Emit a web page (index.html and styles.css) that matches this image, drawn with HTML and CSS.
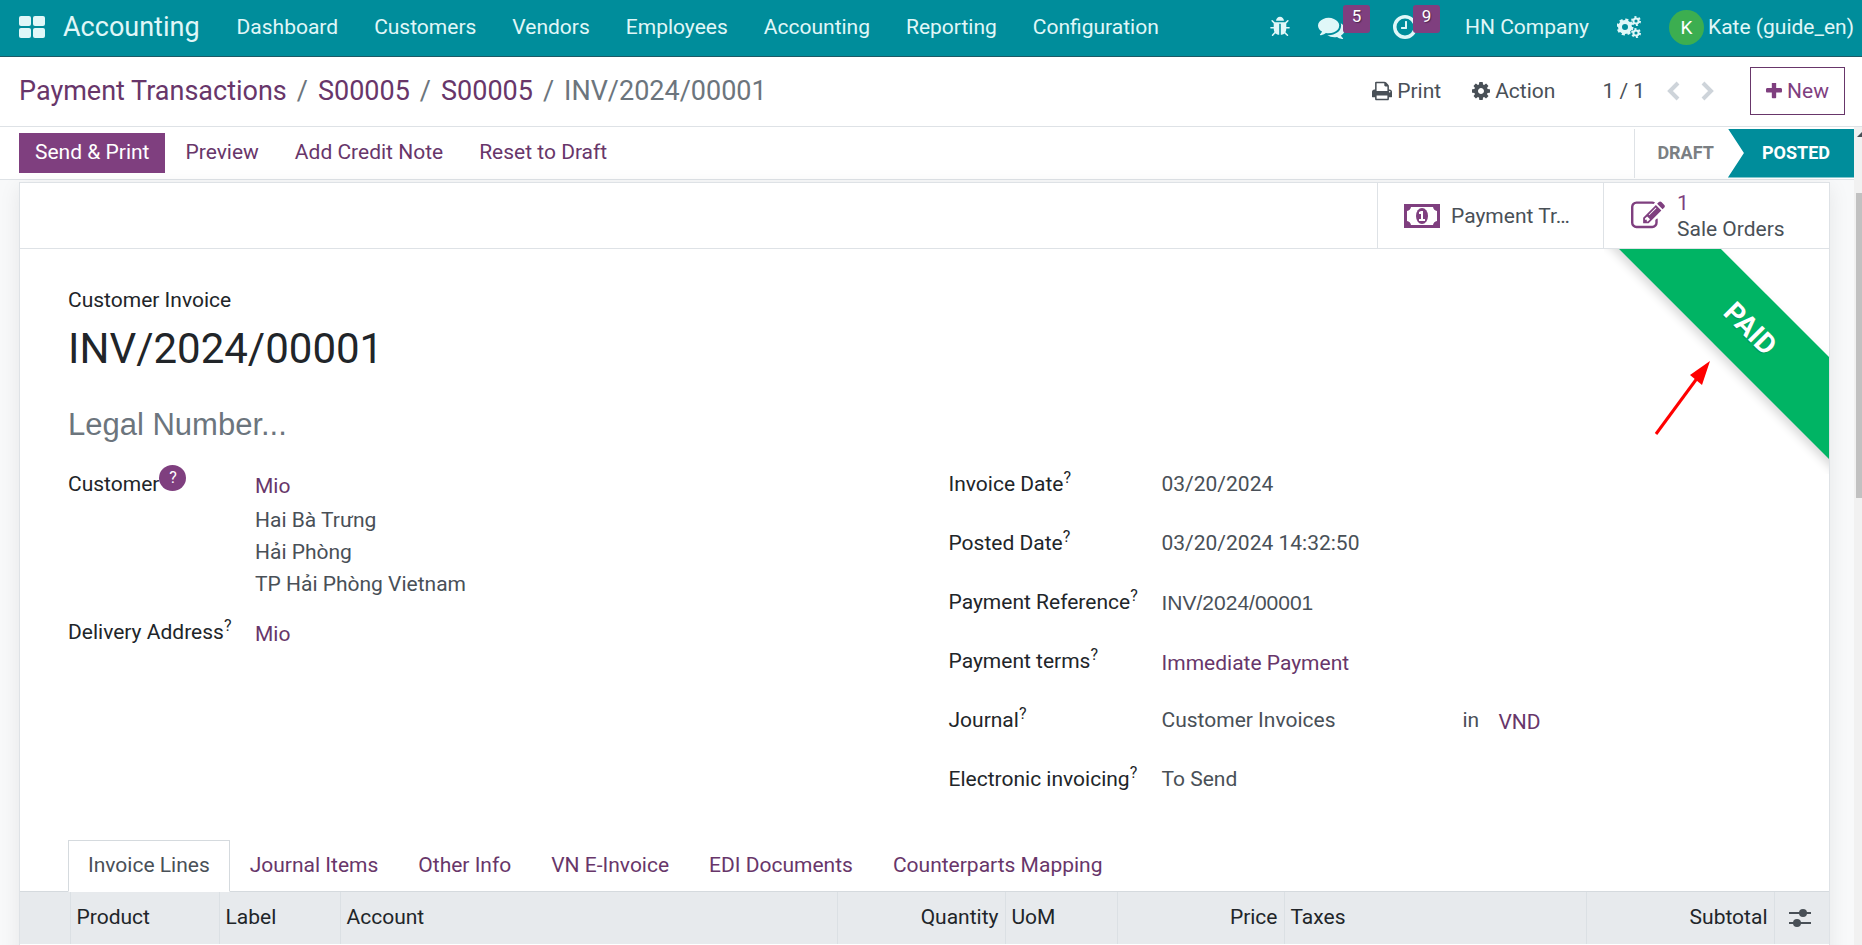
FILE: index.html
```html
<!DOCTYPE html>
<html lang="en">
	<head>
		<meta charset="UTF-8">
		<title>INV/2024/00001</title>
		<link rel="stylesheet" href="styles.css">
	</head>

	<body>
		<!--top menu-->
		<header class="navbar">
			<a class="apps" href="#" aria-label="Home menu">
				<svg width="26" height="22" viewBox="0 0 26 22"><rect width="12" height="10" rx="2"/><rect x="14" width="12" height="10" rx="2"/><rect y="12" width="12" height="10" rx="2"/><rect x="14" y="12" width="12" height="10" rx="2"/></svg>
			</a>
			<a class="brand" href="#">Accounting</a>
			<nav class="menu">
				<a href="#">Dashboard</a>
				<a href="#">Customers</a>
				<a href="#">Vendors</a>
				<a href="#">Employees</a>
				<a href="#">Accounting</a>
				<a href="#">Reporting</a>
				<a href="#">Configuration</a>
			</nav>
			<div class="systray">
				<button class="bug" aria-label="Debug">
					<svg width="22" height="22" viewBox="0 0 1792 1792"><path d="M1696 960q0 26-19 45t-45 19h-224q0 171-67 290l208 209q19 19 19 45t-19 45q-18 19-45 19t-45-19l-198-197q-5 5-15 13t-42 28.500-65 36.500-82 29-97 13v-896h-128v896q-51 0-101.500-13.500t-87-33-66-39-43.500-32.500l-15-14-183 207q-20 21-48 21-24 0-43-16-19-18-20.500-44.500t15.500-46.500l202-227q-58-114-58-274h-224q-26 0-45-19t-19-45 19-45 45-19h224v-294l-173-173q-19-19-19-45t19-45 45-19 45 19l173 173h844l173-173q19-19 45-19t45 19 19 45-19 45l-173 173v294h224q26 0 45 19t19 45zm-480-576h-640q0-133 93.500-226.500t226.500-93.500 226.500 93.500 93.500 226.500z"/></svg>
				</button>
				<button class="chat" aria-label="Messages">
					<svg width="27" height="27" viewBox="0 0 1792 1792"><path d="M1408 768q0 139-94 257t-256.500 186.500-353.500 68.500q-86 0-176-16-124 88-278 128-36 9-86 16h-3q-11 0-20.500-8t-11.500-21q-1-3-1-6.500t.5-6.500 2-6l2.500-5 3.500-5.500 4-5 4.500-5 4-4.500q5-6 23-25t26-29.500 22.500-29 25-38.500 20.500-44q-124-72-195-177t-71-224q0-139 94-257t256.500-186.500 353.500-68.500 353.500 68.500 256.500 186.500 94 257zm384 256q0 120-71 224.500t-195 176.500q10 24 20.500 44t25 38.500 22.500 29 26 29.500 23 25q1 1 4 4.500t4.500 5 4 5 3.500 5.500l2.500 5 2 6 .5 6.500-1 6.500q-3 14-13 22t-22 7q-50-7-86-16-154-40-278-128-90 16-176 16-271 0-472-132 58 4 88 4 161 0 309-45t264-129q125-92 192-212t67-254q0-77-23-152 129 71 204 178t75 230z"/></svg>
					<span class="badge">5</span>
				</button>
				<button class="clock" aria-label="Activities">
					<svg width="28" height="28" viewBox="0 0 1792 1792"><circle cx="896" cy="896" r="656" fill="none" stroke="currentColor" stroke-width="224"/><path d="M1024 544v448q0 14-9 23t-23 9h-320q-14 0-23-9t-9-23v-64q0-14 9-23t23-9h224v-352q0-14 9-23t23-9h64q14 0 23 9t9 23z"/></svg>
					<span class="badge">9</span>
				</button>
				<button class="company">HN Company</button>
				<button class="tools" aria-label="Settings">
					<svg width="24" height="22" viewBox="0 0 24 22" fill="none" stroke="currentColor">
						<circle cx="8" cy="11" r="5" stroke-width="4"/>
						<circle cx="8" cy="11" r="7" stroke-width="3" stroke-dasharray="3 2.5"/>
						<circle cx="19" cy="5" r="2.600" stroke-width="2"/>
						<circle cx="19" cy="5" r="4" stroke-width="2" stroke-dasharray="2 2.190"/>
						<circle cx="19" cy="17" r="2.600" stroke-width="2"/>
						<circle cx="19" cy="17" r="4" stroke-width="2" stroke-dasharray="2 2.190"/>
					</svg>
				</button>
				<button class="user"><span class="avatar">K</span>Kate (guide_en)</button>
			</div>
		</header>

		<!--breadcrumb and record actions-->
		<div class="controlPanel">
			<nav class="breadcrumb">
				<a href="#">Payment Transactions</a><span>/</span><a href="#">S00005</a><span>/</span><a href="#">S00005</a><span>/</span>INV/2024/00001
			</nav>
			<div class="actions">
				<button class="print">
					<svg width="20" height="22" viewBox="0 0 1664 1792"><path d="M384 1536h896v-256H384v256zm0-640h896V512h-160q-40 0-68-28t-28-68V256H384v640zm1152 64q0-26-19-45t-45-19-45 19-19 45 19 45 45 19 45-19 19-45zm128 0v416q0 13-9.500 22.500t-22.500 9.500h-224v160q0 40-28 68t-68 28H352q-40 0-68-28t-28-68v-160H32q-13 0-22.500-9.500T0 1376V960q0-79 56.500-135.500T192 768h64V224q0-40 28-68t68-28h672q40 0 88 20t76 48l152 152q28 28 48 76t20 88v256h64q79 0 135.500 56.500T1664 960z"/></svg>
					Print
				</button>
				<button class="action">
					<svg width="18" height="18" viewBox="128 128 1536 1536"><path d="M1152 896q0-106-75-181t-181-75-181 75-75 181 75 181 181 75 181-75 75-181zm512-109v222q0 12-8 23t-20 13l-185 28q-19 54-39 91 35 50 107 138 10 12 10 25t-9 23q-27 37-99 108t-94 71q-12 0-26-9l-138-108q-44 23-91 38-16 136-29 186-7 28-36 28h-222q-14 0-24.500-8.500t-11.500-21.500l-28-184q-49-16-90-37l-141 107q-10 9-25 9-14 0-25-11-126-114-165-168-7-10-7-23 0-12 8-23 15-21 51-66.500t54-70.500q-27-50-41-99l-183-27q-13-2-21-12.500t-8-23.500v-222q0-12 8-23t19-13l186-28q14-46 39-92-40-57-107-138-10-12-10-24 0-10 9-23 26-36 98.500-107.500t94.500-71.500q13 0 26 10l138 107q44-23 91-38 16-136 29-186 7-28 36-28h222q14 0 24.500 8.500t11.500 21.500l28 184q49 16 90 37l142-107q9-9 24-9 13 0 25 10 129 119 165 170 7 8 7 22 0 12-8 23-15 21-51 66.500t-54 70.500q26 50 41 98l183 28q13 2 21 12.500t8 23.500z"/></svg>
					Action
				</button>
				<span class="pager">1 / 1</span>
				<button class="arrow" aria-label="Previous"><svg width="14" height="20" viewBox="0 0 14 20"><path d="M11 2L3 10l8 8"/></svg></button>
				<button class="arrow" aria-label="Next"><svg width="14" height="20" viewBox="0 0 14 20"><path d="M3 2l8 8-8 8"/></svg></button>
				<button class="new">
					<svg width="16" height="16" viewBox="192 192 1408 1408"><path d="M1600 736v192q0 40-28 68t-68 28h-416v416q0 40-28 68t-68 28h-192q-40 0-68-28t-28-68v-416h-416q-40 0-68-28t-28-68v-192q0-40 28-68t68-28h416v-416q0-40 28-68t68-28h192q40 0 68 28t28 68v416h416q40 0 68 28t28 68z"/></svg>
					New
				</button>
			</div>
		</div>

		<div class="content">
			<main class="form">
				<div class="statusbar">
					<div class="buttons">
						<button class="primary">Send &amp; Print</button>
						<button>Preview</button>
						<button>Add Credit Note</button>
						<button>Reset to Draft</button>
					</div>
					<div class="states">
						<button class="draft">Draft</button>
						<button class="posted">Posted</button>
					</div>
				</div>

				<section class="sheet">
					<div class="buttonBox">
						<button class="stat">
							<svg width="36" height="24" viewBox="0 0 36 24"><path fill-rule="evenodd" d="M0 0h36v24H0zM7 3a5 5 0 0 1-4 4v10a5 5 0 0 1 4 4h22a5 5 0 0 1 4-4V7a5 5 0 0 1-4-4z"/><ellipse cx="18" cy="12" rx="6" ry="8"/><path fill="#fff" d="M17 7h2v8h2v2h-6v-2h2v-5h-2V8z"/></svg>
							<span>Payment Tr…</span>
						</button>
						<button class="stat">
							<svg width="36" height="34" viewBox="0 0 1792 1792"><path d="M888 1184l116-116-152-152-116 116v56h96v96h56zm440-720q-16-16-33 1l-350 350q-17 17-1 33t33-1l350-350q17-17 1-33zm80 594v190q0 119-84.500 203.500t-203.500 84.500h-832q-119 0-203.500-84.500t-84.500-203.500v-832q0-119 84.500-203.500t203.500-84.500h832q63 0 117 25 15 7 18 23 3 17-9 29l-49 49q-14 14-32 8-23-6-45-6h-832q-66 0-113 47t-47 113v832q0 66 47 113t113 47h832q66 0 113-47t47-113v-126q0-13 9-22l64-64q15-15 35-7t20 29zm-96-738l288 288-672 672h-288v-288zm444 132l-92 92-288-288 92-92q28-28 68-28t68 28l152 152q28 28 28 68t-28 68z"/></svg>
							<span><b>1</b>Sale Orders</span>
						</button>
					</div>

					<div class="body">
						<div class="ribbon"><span>Paid</span></div>
						<svg class="pointer" width="58" height="76" viewBox="0 0 58 76"><path d="M2 75L44 18" stroke="#f00" stroke-width="3"/><path d="M56 2L36 16l6 5 6 5z" fill="#f00"/></svg>

						<p class="type">Customer Invoice</p>
						<h1>INV/2024/00001</h1>
						<input class="legal" type="text" placeholder="Legal Number..." aria-label="Legal Number">

						<div class="groups">
							<div class="group">
								<div class="row customer">
									<span class="label">Customer<sup class="help">?</sup></span>
									<div class="value">
										<a href="#">Mio</a>
										<p>Hai Bà Trưng<br>Hải Phòng<br>TP Hải Phòng Vietnam</p>
									</div>
								</div>
								<div class="row">
									<span class="label">Delivery Address<sup>?</sup></span>
									<div class="value"><a href="#">Mio</a></div>
								</div>
							</div>
							<div class="group">
								<div class="row">
									<span class="label">Invoice Date<sup>?</sup></span>
									<div class="value">03/20/2024</div>
								</div>
								<div class="row">
									<span class="label">Posted Date<sup>?</sup></span>
									<div class="value">03/20/2024 14:32:50</div>
								</div>
								<div class="row">
									<label class="label" for="reference">Payment Reference<sup>?</sup></label>
									<div class="value"><input id="reference" type="text" value="INV/2024/00001"></div>
								</div>
								<div class="row">
									<span class="label">Payment terms<sup>?</sup></span>
									<div class="value"><a href="#">Immediate Payment</a></div>
								</div>
								<div class="row">
									<span class="label">Journal<sup>?</sup></span>
									<div class="value journal"><span>Customer Invoices</span><span>in</span><a href="#">VND</a></div>
								</div>
								<div class="row">
									<span class="label">Electronic invoicing<sup>?</sup></span>
									<div class="value">To Send</div>
								</div>
							</div>
						</div>
					</div>

					<nav class="tabs">
						<a class="current" href="#">Invoice Lines</a>
						<a href="#">Journal Items</a>
						<a href="#">Other Info</a>
						<a href="#">VN E-Invoice</a>
						<a href="#">EDI Documents</a>
						<a href="#">Counterparts Mapping</a>
					</nav>
					<table class="lines">
						<thead>
							<tr>
								<th class="handle"></th>
								<th class="product">Product</th>
								<th class="name">Label</th>
								<th>Account</th>
								<th class="quantity number">Quantity</th>
								<th class="uom">UoM</th>
								<th class="price number">Price</th>
								<th class="taxes">Taxes</th>
								<th class="subtotal number">Subtotal</th>
								<th class="options">
									<button aria-label="Columns"><svg width="22" height="20" viewBox="0 0 22 20"><path d="M0 5h22M0 15h22" stroke="currentColor" stroke-width="2"/><circle cx="14" cy="5" r="4"/><circle cx="8" cy="15" r="4"/></svg></button>
								</th>
							</tr>
						</thead>
					</table>
				</section>
			</main>
			<div class="scrollbar">
				<svg width="8" height="5" viewBox="0 0 8 5"><path d="M8 0L3 5h5z"/></svg>
				<i></i>
			</div>
		</div>
	</body>
</html>
```
FILE: styles.css
```css
*{
	margin: 0;
	padding: 0;
	box-sizing: border-box;
}
html,body{
	height: 100%;
	overflow: hidden;
}
body{
	display: flex;
	flex-direction: column;
	background-color: #fff;
	color: #495057;
	font: 21px/32px Roboto, "Liberation Sans", sans-serif;
}
a{
	color: #68366a;
	text-decoration: none;
}
button{
	border: none;
	background: none;
	color: inherit;
	font: inherit;
	white-space: nowrap;
	cursor: pointer;
}
input{
	display: block;
	border: none;
	outline: none;
	background: none;
	color: inherit;
}
svg{
	display: block;
	flex: none;
	fill: currentColor;
}
svg[fill="none"]{
	fill: none;
}

/* top menu */
.navbar{
	display: flex;
	align-items: center;
	flex: none;
	height: 57px;
	padding: 0 8px 2px 19px;
	border-bottom: 1px solid #1c5a66;
	background-color: #008d9b;
	color: #e0f7f8;
}
.navbar a{
	color: inherit;
}
.navbar .brand{
	margin: 0 19px 0 18px;
	font-size: 27px;
}
.menu{
	display: flex;
}
.menu a{
	padding: 0 18px;
}
.systray{
	display: flex;
	align-items: center;
	margin-left: auto;
}
.systray button{
	position: relative;
	display: flex;
	align-items: center;
}
.systray .chat{
	margin-left: 27px;
}
.systray .clock{
	margin-left: 46px;
}
.systray .company{
	margin-left: 46px;
}
.systray .tools{
	margin-left: 28px;
}
.systray .user{
	margin-left: 28px;
}
.badge{
	position: absolute;
	left: 25px;
	bottom: 8px;
	width: 27px;
	height: 28px;
	border-radius: 3px;
	background-color: #7f3f7f;
	color: #fff;
	font-size: 17px;
	line-height: 22px;
	text-align: center;
	text-shadow: 1px 1px 1px rgba(0,0,0,.4);
}
.clock .badge{
	left: 22px;
}
.avatar{
	width: 35px;
	height: 35px;
	margin-right: 4px;
	border-radius: 50%;
	background-color: #3cae50;
	color: #fff;
	font-size: 19px;
	line-height: 35px;
	text-align: center;
}

/* breadcrumb */
.controlPanel{
	display: flex;
	align-items: center;
	justify-content: space-between;
	flex: none;
	height: 70px;
	padding: 0 17px 2px 19px;
	border-bottom: 1px solid #dee2e6;
}
.breadcrumb{
	color: #6c757d;
	font-size: 27px;
}
.breadcrumb span{
	padding: 0 10px;
}
.actions{
	display: flex;
	align-items: center;
}
.actions button{
	display: flex;
	align-items: center;
	gap: 5px;
}
.actions .action{
	margin-left: 31px;
}
.actions .pager{
	margin: 0 22px 0 47px;
}
.actions .arrow{
	margin-right: 19px;
	color: #ced4da;
}
.arrow path{
	fill: none;
	stroke: currentColor;
	stroke-width: 4px;
}
.actions .new{
	height: 48px;
	margin-left: 17px;
	padding: 0 15px;
	border: 1px solid #68366a;
	color: #7f3f7f;
}

.content{
	display: flex;
	flex: 1;
	min-height: 0;
}
.form{
	flex: 1;
	overflow: hidden;
	background-color: #f8f9fa;
}

/* status bar */
.statusbar{
	display: flex;
	align-items: center;
	justify-content: space-between;
	height: 53px;
	padding-left: 19px;
	border-bottom: 1px solid #dee2e6;
	background-color: #fff;
}
.buttons{
	display: flex;
	gap: 4px;
}
.buttons button{
	height: 40px;
	padding: 0 16px 2px;
	color: #68366a;
}
.buttons .primary{
	background-color: #7f3f7f;
	color: #fff;
}
.states{
	display: flex;
}
.states button{
	height: 49px;
	font-size: 18px;
	font-weight: 700;
	text-transform: uppercase;
}
.states .draft{
	padding: 0 14px 0 22px;
	border-left: 1px solid #dee2e6;
	color: #7b7f83;
}
.states .posted{
	padding: 0 24px 0 34px;
	background-color: #008d9b;
	color: #fff;
	clip-path: polygon(0 0, 100% 0, 100% 100%, 0 100%, 16px 50%);
}

/* sheet */
.sheet{
	min-height: 100%;
	margin: 2px 24px 0 19px;
	border: 1px solid #dee2e6;
	background-color: #fff;
	box-shadow: 0 5px 20px rgba(0,0,0,.08);
}
.buttonBox{
	display: flex;
	justify-content: flex-end;
	height: 66px;
	border-bottom: 1px solid #dee2e6;
}
.stat{
	display: flex;
	align-items: center;
	gap: 11px;
	width: 226px;
	padding-left: 26px;
	border-left: 1px solid #dee2e6;
	line-height: 26px;
	text-align: left;
}
.stat svg{
	color: #7f3f7f;
}
.stat b{
	display: block;
	color: #7f3f7f;
	font-weight: 400;
}
.body{
	position: relative;
	padding: 35px 48px 18px;
}

.ribbon{
	position: absolute;
	top: 0;
	right: 0;
	width: 225px;
	height: 225px;
	overflow: hidden;
}
.ribbon span{
	position: absolute;
	top: 44px;
	left: -24px;
	width: 340px;
	height: 72px;
	background-color: #00b464;
	box-shadow: 0 5px 10px rgba(0,0,0,.15);
	color: #fff;
	font-size: 28px;
	font-weight: 700;
	line-height: 72px;
	text-align: center;
	text-transform: uppercase;
	text-shadow: 0 1px 1px rgba(0,0,0,.2);
	transform: rotate(45deg);
}
.pointer{
	position: absolute;
	top: 110px;
	right: 117px;
}

.type{
	color: #212529;
}
h1{
	margin-top: 8px;
	color: #212529;
	font-size: 42px;
	font-weight: 400;
	line-height: 50px;
}
.legal{
	width: 50%;
	height: 36px;
	margin-top: 33px;
	font: 31px/36px "Liberation Sans", Arial, sans-serif;
}
.legal::placeholder{
	color: #6c757d;
	opacity: 1;
}
.groups{
	display: grid;
	grid-template-columns: 1fr 1fr;
	gap: 48px;
	margin-top: 25px;
}
.row{
	display: grid;
	grid-template-columns: 187px 1fr;
	height: 59px;
}
.group + .group .row{
	grid-template-columns: 213px 1fr;
}
.row.customer{
	height: auto;
	margin-bottom: 16px;
}
.value a{
	display: block;
	padding-top: 2px;
}
.customer p{
	margin-top: 2px;
}
.label{
	color: #212529;
	white-space: nowrap;
}
.label sup{
	font-size: 16px;
	line-height: 0;
}
.label .help{
	display: inline-block;
	width: 27px;
	height: 26px;
	margin: -8px 0;
	border-radius: 50%;
	background-color: #7f3f7f;
	color: #fff;
	line-height: 26px;
	text-align: center;
}
.value input{
	width: 100%;
	height: 34px;
	font: 21px/34px "Liberation Sans", Arial, sans-serif;
}
.journal{
	display: grid;
	grid-template-columns: 301px 36px 1fr;
}

/* tabs */
.tabs{
	display: flex;
	height: 52px;
	padding-left: 48px;
	border-bottom: 1px solid #d5dade;
}
.tabs a{
	height: 52px;
	padding: 0 19px;
	border: 1px solid transparent;
	line-height: 48px;
}
.tabs .current{
	border-color: #d5dade;
	border-bottom-color: #fff;
	background-color: #fff;
	color: #495057;
}

.lines{
	width: 100%;
	border-collapse: collapse;
	table-layout: fixed;
}
.lines th{
	height: 52px;
	padding: 0 6px 2px;
	border-left: 1px solid #dbe0e4;
	background-color: #e7eaed;
	color: #212529;
	font-weight: 400;
	text-align: left;
}
.lines th.number{
	text-align: right;
}
.lines .handle{
	width: 50px;
	border-left: none;
}
.lines .product{
	width: 149px;
}
.lines .name{
	width: 121px;
}
.lines .quantity{
	width: 168px;
}
.lines .uom{
	width: 112px;
}
.lines .price{
	width: 167px;
}
.lines .taxes{
	width: 302px;
}
.lines .subtotal{
	width: 188px;
}
.lines .options{
	width: 55px;
	padding: 0 14px;
	color: #495057;
}
.options button{
	display: block;
}

.scrollbar{
	width: 8px;
	padding-top: 5px;
	background-color: #f1f1f1;
}
.scrollbar i{
	display: block;
	height: 305px;
	margin: 56px 0 0 2px;
	background-color: #c1c1c1;
}
```
